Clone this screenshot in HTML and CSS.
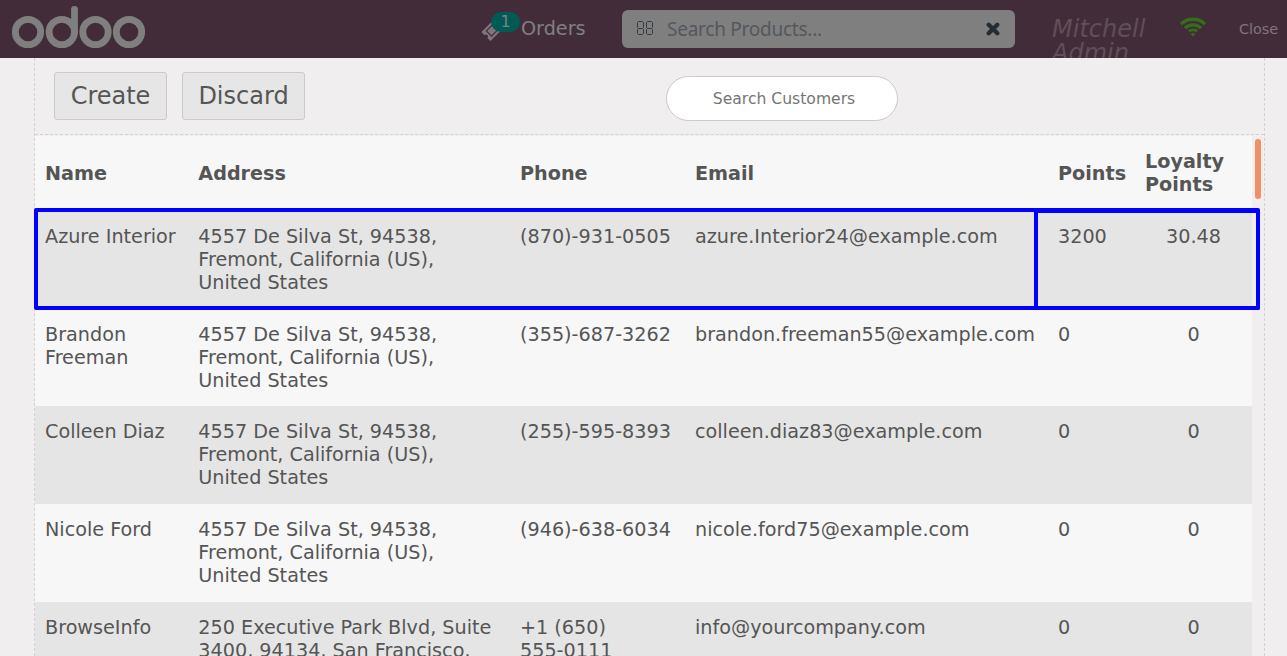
FILE: index.html
```html
<!DOCTYPE html>
<html lang="en">
<head>
<meta charset="utf-8">
<title>Odoo POS - Customers</title>
<link rel="stylesheet" href="styles.css">
</head>
<body>
<header class="topbar">
  <svg class="logo" width="136" height="44" viewBox="0 0 136 44" fill="none" stroke="#7f7f7f" stroke-width="6.8">
    <circle cx="16" cy="27" r="12.7"/><circle cx="49.8" cy="27" r="12.7"/><circle cx="83.5" cy="27" r="12.7"/><circle cx="117" cy="27" r="12.7"/>
    <path d="M62.5 27V4.5" stroke-linecap="round"/>
  </svg>
  <div class="orders">
    <svg class="ticket" width="24" height="24" viewBox="0 0 24 24">
      <g transform="translate(11.5 11) rotate(-45)">
        <path fill="#80747b" d="M-9.3-6.4H9.3V-2A2 2 0 0 0 9.3 2V6.4H-9.3V2A2 2 0 0 0-9.3-2Z"/>
        <path d="M-5-3.7H5V3.7H-5Z" fill="none" stroke="#432c3a" stroke-width="1.1"/>
      </g>
    </svg>
    <span class="badge">1</span>
    <span class="orders-label">Orders</span>
  </div>
  <div class="product-search">
    <svg class="grid-icon" width="18" height="16" viewBox="0 0 18 16" fill="none" stroke="#343b41" stroke-width="1">
      <path d="M2.5.5H6.5L7.5 1.5V6.5L6.5 7.5H2.5L1.5 6.5V1.5ZM11.5.5H15.5L16.5 1.5V6.5L15.5 7.5H11.5L10.5 6.5V1.5ZM2.5 7.5H6.5L7.5 8.5V12.5L6.5 13.5H2.5L1.5 12.5V8.5ZM11.5 7.5H15.5L16.5 8.5V12.5L15.5 13.5H11.5L10.5 12.5V8.5Z"/>
    </svg>
    <span class="product-placeholder">Search Products...</span>
    <svg class="clear" width="14" height="14" viewBox="0 0 14 14" stroke="#242b31" stroke-width="4.2" stroke-linecap="round"><path d="M2.7 2.7 11.3 11.3M11.3 2.7 2.7 11.3"/></svg>
  </div>
  <div class="user">Mitchell Admin</div>
  <svg class="wifi" width="28" height="20" viewBox="0 0 28 20" fill="none" stroke="#366d18" stroke-width="3.3">
    <path d="M2 7.1A17.3 17.3 0 0 1 26 7.1"/><path d="M6 11.1A11.6 11.6 0 0 1 22 11.1"/><path d="M9.9 14.6A6 6 0 0 1 18.1 14.6" stroke-width="2.8"/>
    <path d="M11.6 17Q14 15 16.4 17L14 19.5Z" fill="#366d18" stroke="none"/>
  </svg>
  <span class="close">Close</span>
</header>
<main class="screen">
  <div class="actions">
    <button class="btn create">Create</button>
    <button class="btn discard">Discard</button>
    <input class="customer-search" placeholder="Search Customers">
  </div>
  <section class="list">
    <div class="row head"><div>Name</div><div>Address</div><div>Phone</div><div>Email</div><div>Points</div><div>Loyalty Points</div></div>
    <div class="row odd"><div>Azure Interior</div><div>4557 De Silva St, 94538,<br>Fremont, California (US),<br>United States</div><div>(870)-931-0505</div><div>azure.Interior24@example.com</div><div>3200</div><div class="num">30.48</div></div>
    <div class="row"><div>Brandon Freeman</div><div>4557 De Silva St, 94538,<br>Fremont, California (US),<br>United States</div><div>(355)-687-3262</div><div>brandon.freeman55@example.com</div><div>0</div><div class="num">0</div></div>
    <div class="row odd"><div>Colleen Diaz</div><div>4557 De Silva St, 94538,<br>Fremont, California (US),<br>United States</div><div>(255)-595-8393</div><div>colleen.diaz83@example.com</div><div>0</div><div class="num">0</div></div>
    <div class="row"><div>Nicole Ford</div><div>4557 De Silva St, 94538,<br>Fremont, California (US),<br>United States</div><div>(946)-638-6034</div><div>nicole.ford75@example.com</div><div>0</div><div class="num">0</div></div>
    <div class="row odd"><div>BrowseInfo</div><div>250 Executive Park Blvd, Suite<br>3400, 94134, San Francisco,</div><div>+1 (650)<br>555-0111</div><div>info@yourcompany.com</div><div>0</div><div class="num">0</div></div>
    <div class="scroll-thumb"></div>
    <div class="mark mark-row"></div>
    <div class="mark mark-points"></div>
  </section>
</main>
</body>
</html>
```
FILE: styles.css
```css
* { box-sizing: border-box; }
body {
  margin: 0;
  width: 1287px;
  height: 656px;
  overflow: hidden;
  background: #f0eeee;
  color: #555;
  font-family: "DejaVu Sans", sans-serif;
}
.topbar {
  display: flex;
  align-items: flex-start;
  height: 58px;
  overflow: hidden;
  background: #432c3a;
}
.logo { flex: none; margin: 5px 0 0 12px; }
.orders {
  display: flex;
  flex: none;
  position: relative;
  width: 140px;
  margin-left: 333px;
}
.ticket { margin-top: 19px; }
.badge {
  position: absolute;
  left: 10px;
  top: 12px;
  width: 29px;
  height: 20px;
  border-radius: 10px;
  background: #005b55;
  color: #808080;
  font-size: 16px;
  line-height: 20px;
  text-align: center;
}
.orders-label { margin: 17px 0 0 16px; font-size: 19.2px; line-height: 24px; color: #808080; }
.product-search {
  display: flex;
  flex: none;
  align-items: center;
  width: 393px;
  height: 38px;
  margin: 10px 0 0 1px;
  padding: 0 15px 0 14px;
  border-radius: 6px;
  background: #7f7f7f;
}
.product-placeholder { margin-left: 13px; font-family: "Noto Sans", sans-serif; font-size: 19px; letter-spacing: -0.25px; line-height: 26px; color: #53585d; }
.clear { margin-left: auto; }
.user {
  flex: none;
  width: 110px;
  margin: 17px 0 0 37px;
  font-size: 24px;
  line-height: 24px;
  font-style: italic;
  color: #604e59;
}
.wifi { flex: none; margin: 17px 0 0 17px; }
.close { margin: 19px 0 0 32px; font-size: 14.4px; line-height: 20px; color: #80747b; }
.screen {
  width: 1231px;
  height: 598px;
  margin-left: 34px;
  border: 0 dashed #d3d3d3;
  border-width: 0 1px;
}
.actions {
  display: flex;
  align-items: flex-start;
  height: 77px;
  padding-left: 19px;
  border-bottom: 1px dashed #d3d3d3;
}
.btn {
  height: 48px;
  margin: 14px 15px 0 0;
  padding: 0 0 1px;
  border: 1px solid #cacaca;
  border-radius: 3px;
  background: #e6e6e6;
  color: #555;
  font: 24px "DejaVu Sans", sans-serif;
}
.create { width: 113px; }
.discard { width: 123px; }
.customer-search {
  width: 232px;
  height: 45px;
  margin: 18px 0 0 346px;
  padding: 0 0 0 4px;
  border: 1px solid #cacaca;
  border-radius: 23px;
  background: #fff;
  font: 15.6px "DejaVu Sans", sans-serif;
  text-align: center;
}
.customer-search::placeholder { color: #757575; }
.list { position: relative; width: 1217px; height: 520px; padding-top: 1px; }
.row {
  display: grid;
  grid-template-columns: 153.3px 321.7px 175px 363px 87px 117px;
  height: 97.8px;
  padding-top: 14.2px;
  background: #f7f7f7;
  font-size: 19.2px;
  line-height: 23px;
}
.row > div { padding-left: 10px; }
.row .num { padding: 0; text-align: center; }
.head { align-items: center; height: 74.6px; padding-top: 0; font-weight: bold; }
.odd { background: #e5e5e5; }
.row:nth-child(6) { height: 54px; overflow: hidden; }
.scroll-thumb {
  position: absolute;
  left: 1220px;
  top: 4px;
  width: 6px;
  height: 60px;
  border-radius: 3px;
  background: #f28e68;
}
.mark { position: absolute; border: 4px solid #00f; border-radius: 2px; }
.mark-row { left: -1px; top: 73px; width: 1226px; height: 102px; }
.mark-points { left: 999px; top: 74px; width: 226px; height: 101px; }
```
